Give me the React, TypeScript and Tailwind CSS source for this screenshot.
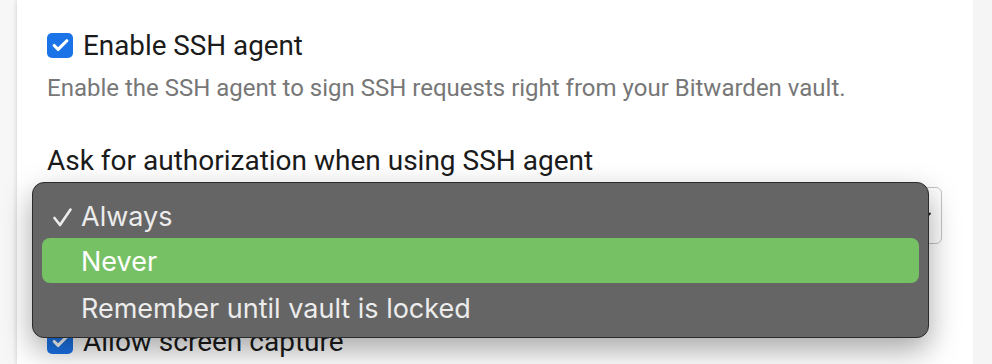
import { Check } from 'lucide-react'

const roboto = { fontFamily: 'Roboto, "Liberation Sans", sans-serif' }

function Checkbox() {
  return (
    <div className="w-[26px] h-[25px] rounded-[5px] bg-[#1b73e8] flex items-center justify-center shrink-0">
      <Check className="w-[19px] h-[19px] text-white" strokeWidth={4} />
    </div>
  )
}

export default function App() {
  return (
    <div className="relative w-[992px] h-[364px] overflow-hidden flex bg-[#f6f6f6]">
      {/* left gutter */}
      <div className="w-[17px] shrink-0 bg-[#f7f7f7]" />

      {/* card */}
      <div
        className="flex-1 bg-white shadow-[0_0_5px_rgba(0,0,0,0.18)] pl-[30px] pr-[31px] pt-[33px] text-[#1b1b1b]"
        style={roboto}
      >
        <div className="flex items-center gap-[10px] h-[25px]">
          <Checkbox />
          <span className="text-[27.8px] leading-none">Enable SSH agent</span>
        </div>
        <p className="mt-[15px] text-[24px] leading-[30px] text-[#777777]">
          Enable the SSH agent to sign SSH requests right from your Bitwarden vault.
        </p>

        <div className="mt-[44px] text-[28px] leading-none">Ask for authorization when using SSH agent</div>

        <div className="mt-[12px] h-[57px] rounded-[6px] border border-[#c4c4c4] flex items-center justify-end pr-[8px]">
          <svg width="16" height="16" viewBox="0 0 16 16" fill="none">
            <path d="M3 5.5 L8 10.5 L13 5.5" stroke="#222" strokeWidth="1.8" strokeLinecap="round" />
          </svg>
        </div>

        <div className="mt-[85px] flex items-center gap-[10px] h-[25px]">
          <Checkbox />
          <span className="text-[28px] leading-none">Allow screen capture</span>
        </div>
      </div>

      {/* right gutter */}
      <div className="w-[19px] shrink-0 bg-[#f5f5f5]" />

      {/* native popup menu */}
      <div
        className="absolute left-[32px] top-[182px] w-[897px] h-[156px] rounded-[12px] bg-[#656565] border border-[#2b2b2b] shadow-[0_12px_30px_rgba(0,0,0,0.35)] px-[9px] pt-[10px] text-[27px] text-[#ececec]"
        style={{ fontFamily: 'Inter, "Liberation Sans", sans-serif' }}
      >
        <div className="h-[45px] flex items-center pt-[4px]">
          <span className="w-[39px] pl-[11px] flex items-center">
            <svg width="19" height="19" viewBox="0 0 19 19" fill="none">
              <path d="M1.5 10 L7 17 L17.5 1.5" stroke="#ececec" strokeWidth="2.6" strokeLinecap="round" strokeLinejoin="round" />
            </svg>
          </span>
          <span>Always</span>
        </div>
        <div className="h-[45px] flex items-center pt-[4px] rounded-[8px] bg-[#77c165] text-white">
          <span className="w-[39px]" />
          <span>Never</span>
        </div>
        <div className="h-[46px] flex items-center pt-[6px]">
          <span className="w-[39px]" />
          <span>Remember until vault is locked</span>
        </div>
      </div>
    </div>
  )
}
